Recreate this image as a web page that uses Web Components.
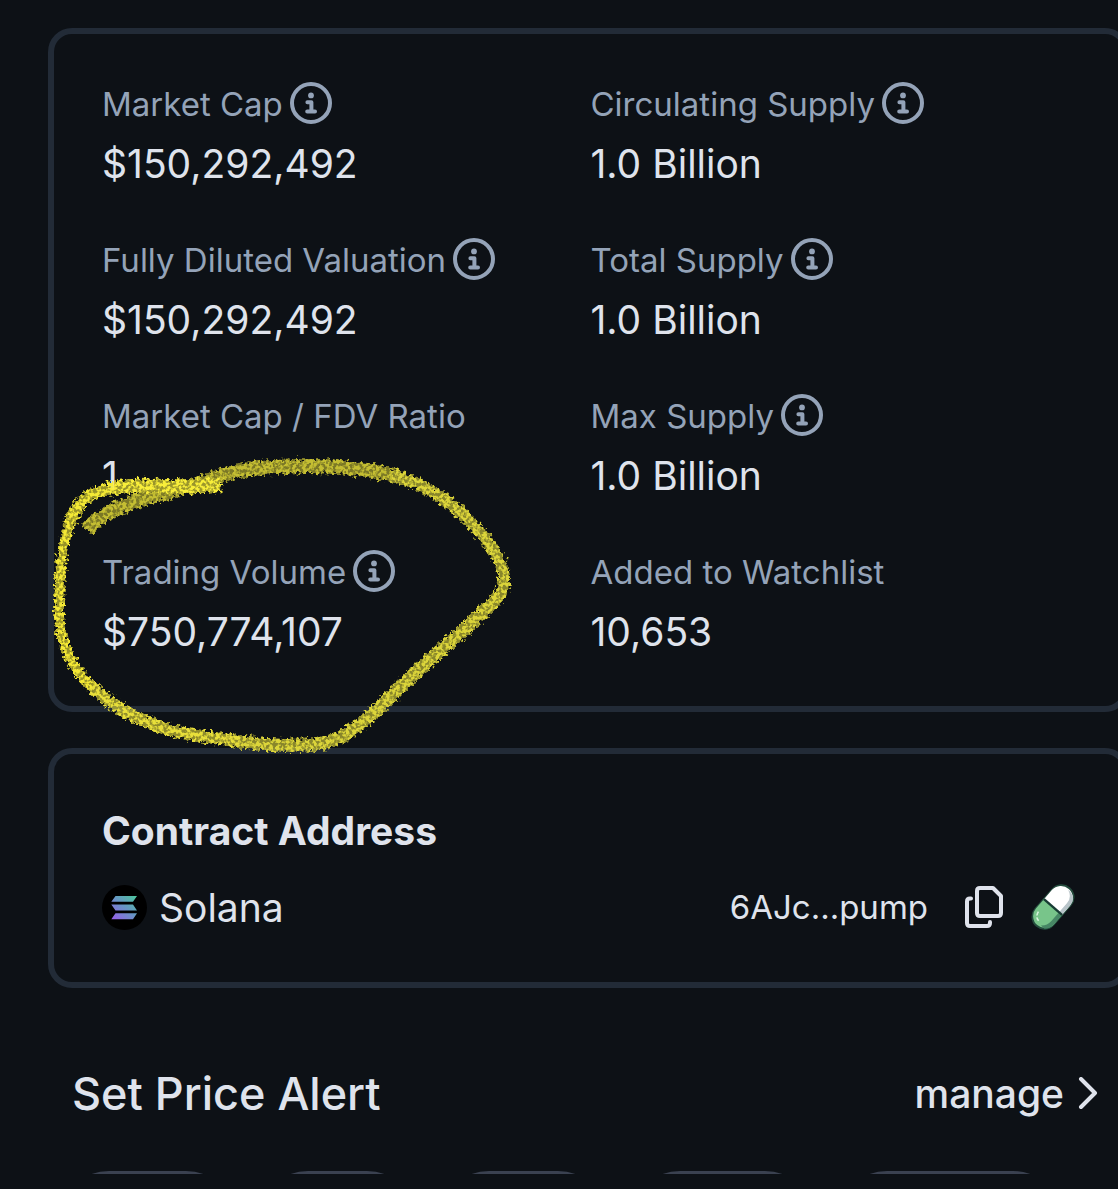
<!DOCTYPE html>
<html lang="en">
<head>
<meta charset="utf-8">
<meta name="viewport" content="width=device-width, initial-scale=1">
<title>Coin stats</title>
<style>
body { margin: 0; background: #0d1116; color: #dfe3ec; font-family: Inter, "Liberation Sans", sans-serif; }
</style>
</head>
<body>
<coin-page></coin-page>
<script>
function define(name, html) {
  const t = document.createElement('template');
  t.innerHTML = html;
  customElements.define(name, class extends HTMLElement {
    constructor() {
      super();
      this.attachShadow({ mode: 'open' }).append(t.content.cloneNode(true));
    }
  });
}

define('info-button', `
<style>
:host { display: inline-flex; padding-bottom: 2px; }
button { all: unset; display: flex; color: #94a3b8; cursor: pointer; }
svg { width: 42px; height: 42px; }
</style>
<button type="button" aria-label="More info">
<svg viewBox="0 0 42 42" fill="none" stroke="currentColor" stroke-linecap="round" stroke-linejoin="round">
<circle cx="21" cy="21" r="19" stroke-width="4"/>
<circle cx="21" cy="13.4" r="2.9" fill="currentColor" stroke="none"/>
<path d="M17.4 20.2H21.4V29.4M17.2 29.4H25" stroke-width="4"/>
</svg></button>`);

define('stat-card', `
<style>
:host { display: block; box-sizing: border-box; border: 6px solid #222b37; border-radius: 24px; padding: var(--card-padding); }
</style><slot></slot>`);

define('stat-item', `
<style>
:host { display: flex; flex-direction: column; gap: 12px; }
.label { display: flex; align-items: center; gap: 7px; height: 48px; font-size: 33px; line-height: 48px; color: #94a3b8; white-space: nowrap; }
.value { font-size: 39px; line-height: 48px; }
</style>
<div class="label"><slot name="label"></slot><slot name="info"></slot></div>
<div class="value"><slot></slot></div>`);

define('stat-grid', `
<style>
:host { display: grid; grid-template-columns: 1fr 1fr; gap: 48px 4px; }
</style><slot></slot>`);

define('contract-row', `
<style>
:host { display: flex; flex-direction: column; gap: 28px; }
h2 { margin: 0; font-size: 39px; line-height: 48px; font-weight: 700; }
.row, .chain, .address { display: flex; align-items: center; }
.row { justify-content: space-between; height: 48px; }
.chain { gap: 12px; font-size: 39px; }
.address { gap: 28px; font-size: 33px; }
button, a { all: unset; display: flex; cursor: pointer; }
svg { display: block; }
.copy { padding-left: 9px; }
</style>
<h2>Contract Address</h2>
<div class="row">
<div class="chain">
<svg width="45" height="45" viewBox="0 0 45 45" aria-hidden="true">
<defs><linearGradient id="sol" gradientUnits="userSpaceOnUse" x1="12" y1="35" x2="34" y2="10">
<stop stop-color="#9460e8"/><stop offset=".5" stop-color="#6794c4"/><stop offset="1" stop-color="#4cc79a"/></linearGradient></defs>
<circle cx="22.5" cy="22.5" r="22.5" fill="#000"/>
<path fill="url(#sol)" d="M13.5 11H35L31 16.8H9.3ZM9.3 19.4H31L35 25.4H13.5ZM13.5 28.2H35L31 34.2H9.3Z"/>
</svg>
<span>Solana</span>
</div>
<div class="address">
<span>6AJc...pump</span>
<button class="copy" type="button" aria-label="Copy address">
<svg width="38" height="42" viewBox="0 0 38 42" fill="none" stroke="#dfe3ec" stroke-width="4" stroke-linejoin="round" stroke-linecap="round">
<path d="M15 2H28L36 10V27Q36 30 33 30H15Q12 30 12 27V5Q12 2 15 2Z"/>
<path d="M6 12.5H5Q2 12.5 2 15.5V37Q2 40 5 40H22Q25 40 25 37V36"/>
</svg></button>
<a href="#pump" aria-label="Open pump page">
<svg width="44" height="48" viewBox="0 0 44 48">
<g transform="translate(22 24) rotate(-49)">
<rect x="-26" y="-13" width="52" height="26" rx="13" fill="#244c3d"/>
<path d="M0 -12H-12A12 12 0 0 0 -12 12H0Z" fill="#78c58a"/>
<path d="M0 -12H12A12 12 0 0 1 12 12H0Z" fill="#fff"/>
<path d="M-22 8Q-18 12 -12 12H-1V8H-12Q-18 8 -22 3Z" fill="#478765"/>
<path d="M1 8H12Q20 8 23 0Q23 12 12 12H1Z" fill="#b8c4c9"/>
<path d="M0 -12V12" stroke="#183c34" stroke-width="2.4"/>
<path d="M-13 -8Q-20 -7 -20 0" fill="none" stroke="#d8f4dd" stroke-width="1.6" stroke-dasharray="4 2"/>
</g></svg></a>
</div></div>`);

define('alert-header', `
<style>
:host { display: flex; align-items: center; justify-content: space-between; }
h2 { margin: 0; font-size: 45px; line-height: 56px; font-weight: 500; }
a { display: flex; align-items: center; gap: 14px; color: inherit; text-decoration: none; font-size: 39px; line-height: 56px; font-weight: 500; }
</style>
<h2>Set Price Alert</h2>
<a href="#alerts">manage
<svg width="20" height="34" viewBox="0 0 20 34" fill="none" stroke="currentColor" stroke-width="4" stroke-linecap="round" stroke-linejoin="round"><path d="M3 2L17 16L3 30"/></svg></a>`);

define('alert-strip', `
<style>
:host { display: flex; gap: 24px; height: 3px; overflow: hidden; }
button { box-sizing: border-box; flex: none; width: 175px; height: 98px; border: 6px solid #3a4150; border-radius: 49px; background: none; padding: 0; }
.s { width: 157px; } .m { width: 167px; } .l { width: 183px; } .xl { width: 224px; }
</style>
<button type="button" aria-label="Alert option 1"></button><button type="button" class="s" aria-label="Alert option 2"></button><button type="button" class="m" aria-label="Alert option 3"></button><button type="button" class="l" aria-label="Alert option 4"></button><button type="button" class="xl" aria-label="Alert option 5"></button>`);

/* Hand-drawn crayon loop laid over the trading volume figure. */
define('crayon-loop', `
<style>
:host { position: absolute; left: 0; top: 0; pointer-events: none; }
svg { display: block; }
</style>
<svg width="560" height="780" viewBox="0 0 560 780" fill="none" stroke-linecap="butt" stroke-linejoin="round" aria-hidden="true">
<defs>
<filter id="grain" filterUnits="userSpaceOnUse" x="30" y="430" width="510" height="350" color-interpolation-filters="sRGB">
<feTurbulence type="fractalNoise" baseFrequency="0.3" numOctaves="2" seed="7" result="n"/>
<feDisplacementMap in="SourceGraphic" in2="n" scale="10" xChannelSelector="R" yChannelSelector="G" result="d"/>
<feColorMatrix in="n" type="matrix" values="0 0 0 0 0  0 0 0 0 0  0 0 0 0 0  0 0 5 0 -1.9" result="m"/>
<feComposite in="d" in2="m" operator="in" result="g"/>
<feComponentTransfer in="d" result="base"><feFuncA type="linear" slope=".6"/></feComponentTransfer>
<feMerge result="c"><feMergeNode in="base"/><feMergeNode in="g"/></feMerge>
<feGaussianBlur in="c" stdDeviation=".6"/>
</filter>
</defs>
<g filter="url(#grain)">
<path stroke="#c4be32" stroke-width="14" d="M87 530C106 506 150 497 184 488S226 470 262 468C315 464 364 466 400 478"/>
<path stroke="#dcd53a" stroke-width="12" d="M392 475C434 486 467 514 490 545C507 568 508 588 496 600"/>
<path stroke="#dcd53a" stroke-width="13" d="M501 593C480 619 439 650 411 677S381 706 373 714"/>
<path stroke="#dcd53a" stroke-width="13" d="M377 710C350 734 335 744 308 745C280 746 256 745 232 740"/>
<path stroke="#e8df3a" stroke-width="12" d="M240 742C202 735 175 735 145 721C118 710 104 699 88 682"/>
<path stroke="#f4e935" stroke-width="10" d="M92 687C66 662 58 635 59 607C60 570 61 545 72 517"/>
<path stroke="#f4e935" stroke-width="12" d="M70 522C78 498 94 490 119 488"/>
<path stroke="#f8ee3a" stroke-width="14" d="M108 489C137 482 171 489 221 485"/>
</g></svg>`);

define('coin-page', `
<style>
:host { display: block; position: relative; overflow: hidden; min-height: 100vh; box-sizing: border-box; padding-top: 28px; }
main { display: flex; flex-direction: column; }
stat-card { margin: 0 -11px 36px 48px; --card-padding: 46px 48px 50px; }
.contract { --card-padding: 53px 48px 51px; }
alert-header { margin: 42px 20px 49px 72px; }
alert-strip { margin-left: 60px; }
</style>
<main>
<stat-card><stat-grid>
<stat-item><span slot="label">Market Cap</span><info-button slot="info"></info-button>$150,292,492</stat-item>
<stat-item><span slot="label">Circulating Supply</span><info-button slot="info"></info-button>1.0 Billion</stat-item>
<stat-item><span slot="label">Fully Diluted Valuation</span><info-button slot="info"></info-button>$150,292,492</stat-item>
<stat-item><span slot="label">Total Supply</span><info-button slot="info"></info-button>1.0 Billion</stat-item>
<stat-item><span slot="label">Market Cap / FDV Ratio</span>1</stat-item>
<stat-item><span slot="label">Max Supply</span><info-button slot="info"></info-button>1.0 Billion</stat-item>
<stat-item><span slot="label">Trading Volume</span><info-button slot="info"></info-button>$750,774,107</stat-item>
<stat-item><span slot="label">Added to Watchlist</span>10,653</stat-item>
</stat-grid></stat-card>
<stat-card class="contract"><contract-row></contract-row></stat-card>
<alert-header></alert-header>
<alert-strip></alert-strip>
</main>
<crayon-loop></crayon-loop>`);
</script>
</body>
</html>
